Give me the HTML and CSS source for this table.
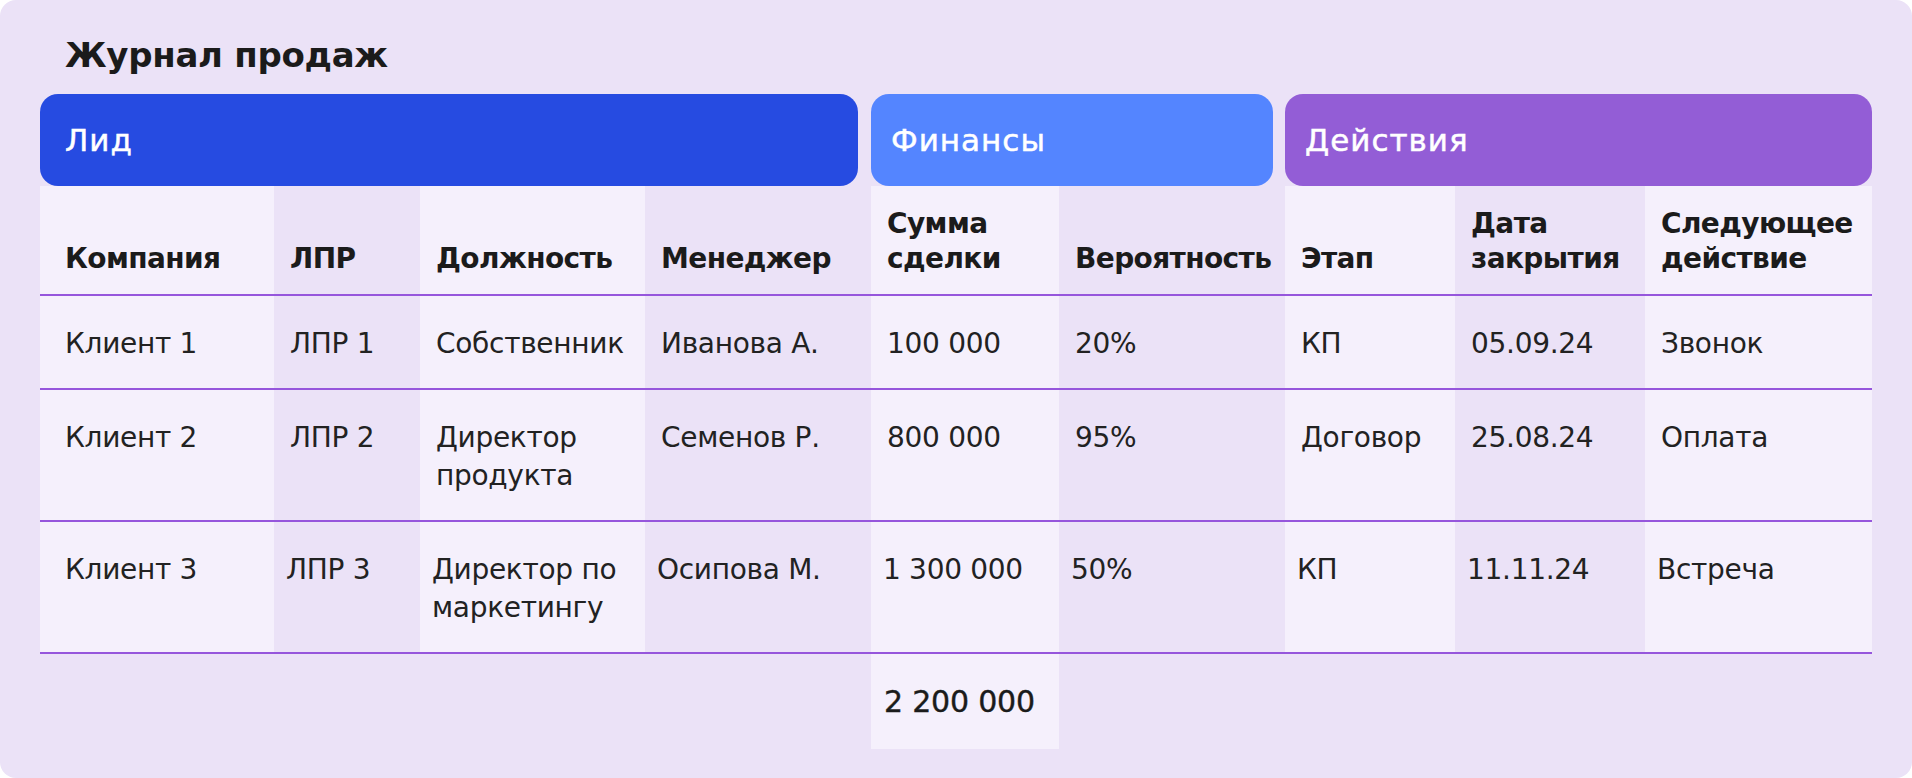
FILE: index.html
```html
<!DOCTYPE html>
<html lang="ru">
<head>
<meta charset="utf-8">
<title>Журнал продаж</title>
<link rel="stylesheet" href="styles.css">
</head>
<body>
<div class="card">
  <h1 class="title">Журнал продаж</h1>
  <div class="table">
    <div class="row groups">
      <div class="group g-lead">Лид</div>
      <div class="group g-fin">Финансы</div>
      <div class="group g-act">Действия</div>
    </div>
    <div class="row head">
      <div class="cell">Компания</div>
      <div class="cell">ЛПР</div>
      <div class="cell">Должность</div>
      <div class="cell">Менеджер</div>
      <div class="cell">Сумма<br>сделки</div>
      <div class="cell">Вероятность</div>
      <div class="cell">Этап</div>
      <div class="cell">Дата<br>закрытия</div>
      <div class="cell">Следующее<br>действие</div>
    </div>
    <div class="row data">
      <div class="cell">Клиент 1</div>
      <div class="cell">ЛПР 1</div>
      <div class="cell">Собственник</div>
      <div class="cell">Иванова А.</div>
      <div class="cell">100 000</div>
      <div class="cell">20%</div>
      <div class="cell">КП</div>
      <div class="cell">05.09.24</div>
      <div class="cell">Звонок</div>
    </div>
    <div class="row data">
      <div class="cell">Клиент 2</div>
      <div class="cell">ЛПР 2</div>
      <div class="cell">Директор<br>продукта</div>
      <div class="cell">Семенов Р.</div>
      <div class="cell">800 000</div>
      <div class="cell">95%</div>
      <div class="cell">Договор</div>
      <div class="cell">25.08.24</div>
      <div class="cell">Оплата</div>
    </div>
    <div class="row data shifted">
      <div class="cell">Клиент 3</div>
      <div class="cell">ЛПР 3</div>
      <div class="cell">Директор по<br>маркетингу</div>
      <div class="cell">Осипова М.</div>
      <div class="cell">1 300 000</div>
      <div class="cell">50%</div>
      <div class="cell">КП</div>
      <div class="cell">11.11.24</div>
      <div class="cell">Встреча</div>
    </div>
    <div class="row total">
      <div class="cell"></div>
      <div class="cell"></div>
      <div class="cell"></div>
      <div class="cell"></div>
      <div class="cell sum">2 200 000</div>
      <div class="cell"></div>
      <div class="cell"></div>
      <div class="cell"></div>
      <div class="cell"></div>
    </div>
  </div>
</div>
</body>
</html>
```

FILE: styles.css
```css
* { box-sizing: border-box; }

html, body {
  margin: 0;
  padding: 0;
  background: #ffffff;
}

body {
  font-family: "DejaVu Sans", "Liberation Sans", sans-serif;
  color: #1f1f1f;
}

.card {
  width: 1912px;
  height: 778px;
  background: #ebe2f7;
  border-radius: 16px;
  padding: 35px 40px 0 40px;
  overflow: hidden;
}

.title {
  margin: 0 0 18px 0;
  padding-left: 25px;
  font-size: 34px;
  line-height: 41px;
  font-weight: 700;
  color: #1b1b1b;
  letter-spacing: -0.3px;
}

.table {
  display: flex;
  flex-direction: column;
}

.row {
  display: grid;
  grid-template-columns: 234px 146px 225px 226px 188px 226px 170px 190px 227px;
}

/* group header bars */
.groups {
  height: 92px;
}

.group {
  display: flex;
  align-items: center;
  border-radius: 18px;
  color: #ffffff;
  font-size: 31px;
  letter-spacing: 1px;
  -webkit-text-stroke: 0.5px #ffffff;
  padding-left: 20px;
}

.g-lead {
  grid-column: 1 / span 4;
  margin-right: 13px;
  background: #264be1;
  padding-left: 25px;
}

.g-fin {
  grid-column: 5 / span 2;
  margin-right: 12px;
  background: #5485ff;
}

.g-act {
  grid-column: 7 / span 3;
  background: #935dd6;
}

/* cells */
.cell {
  padding-left: 16px;
  padding-right: 4px;
  white-space: nowrap;
}

.cell:first-child {
  padding-left: 25px;
}

.head .cell:nth-child(odd),
.data .cell:nth-child(odd) {
  background: #f5f0fc;
}

.head,
.data {
  border-bottom: 2px solid #9656dc;
}

.head {
  height: 110px;
}

.head .cell {
  display: flex;
  flex-direction: column;
  justify-content: flex-end;
  padding-bottom: 18px;
  font-size: 28px;
  line-height: 35px;
  font-weight: 700;
  letter-spacing: -0.6px;
  color: #1b1b1b;
}

.data .cell {
  padding-top: 29px;
  padding-bottom: 25px;
  font-size: 28px;
  line-height: 38px;
  letter-spacing: -0.3px;
  color: #222222;
}

.shifted .cell:not(:first-child) {
  padding-left: 12px;
}

.total .cell {
  padding-top: 29px;
  padding-bottom: 28px;
  font-size: 30px;
  line-height: 38px;
  min-height: 95px;
}

.total .sum {
  background: #f5f0fc;
  color: #1b1b1b;
  -webkit-text-stroke: 0.4px #1b1b1b;
  letter-spacing: -0.2px;
  padding-left: 13px;
}
```
